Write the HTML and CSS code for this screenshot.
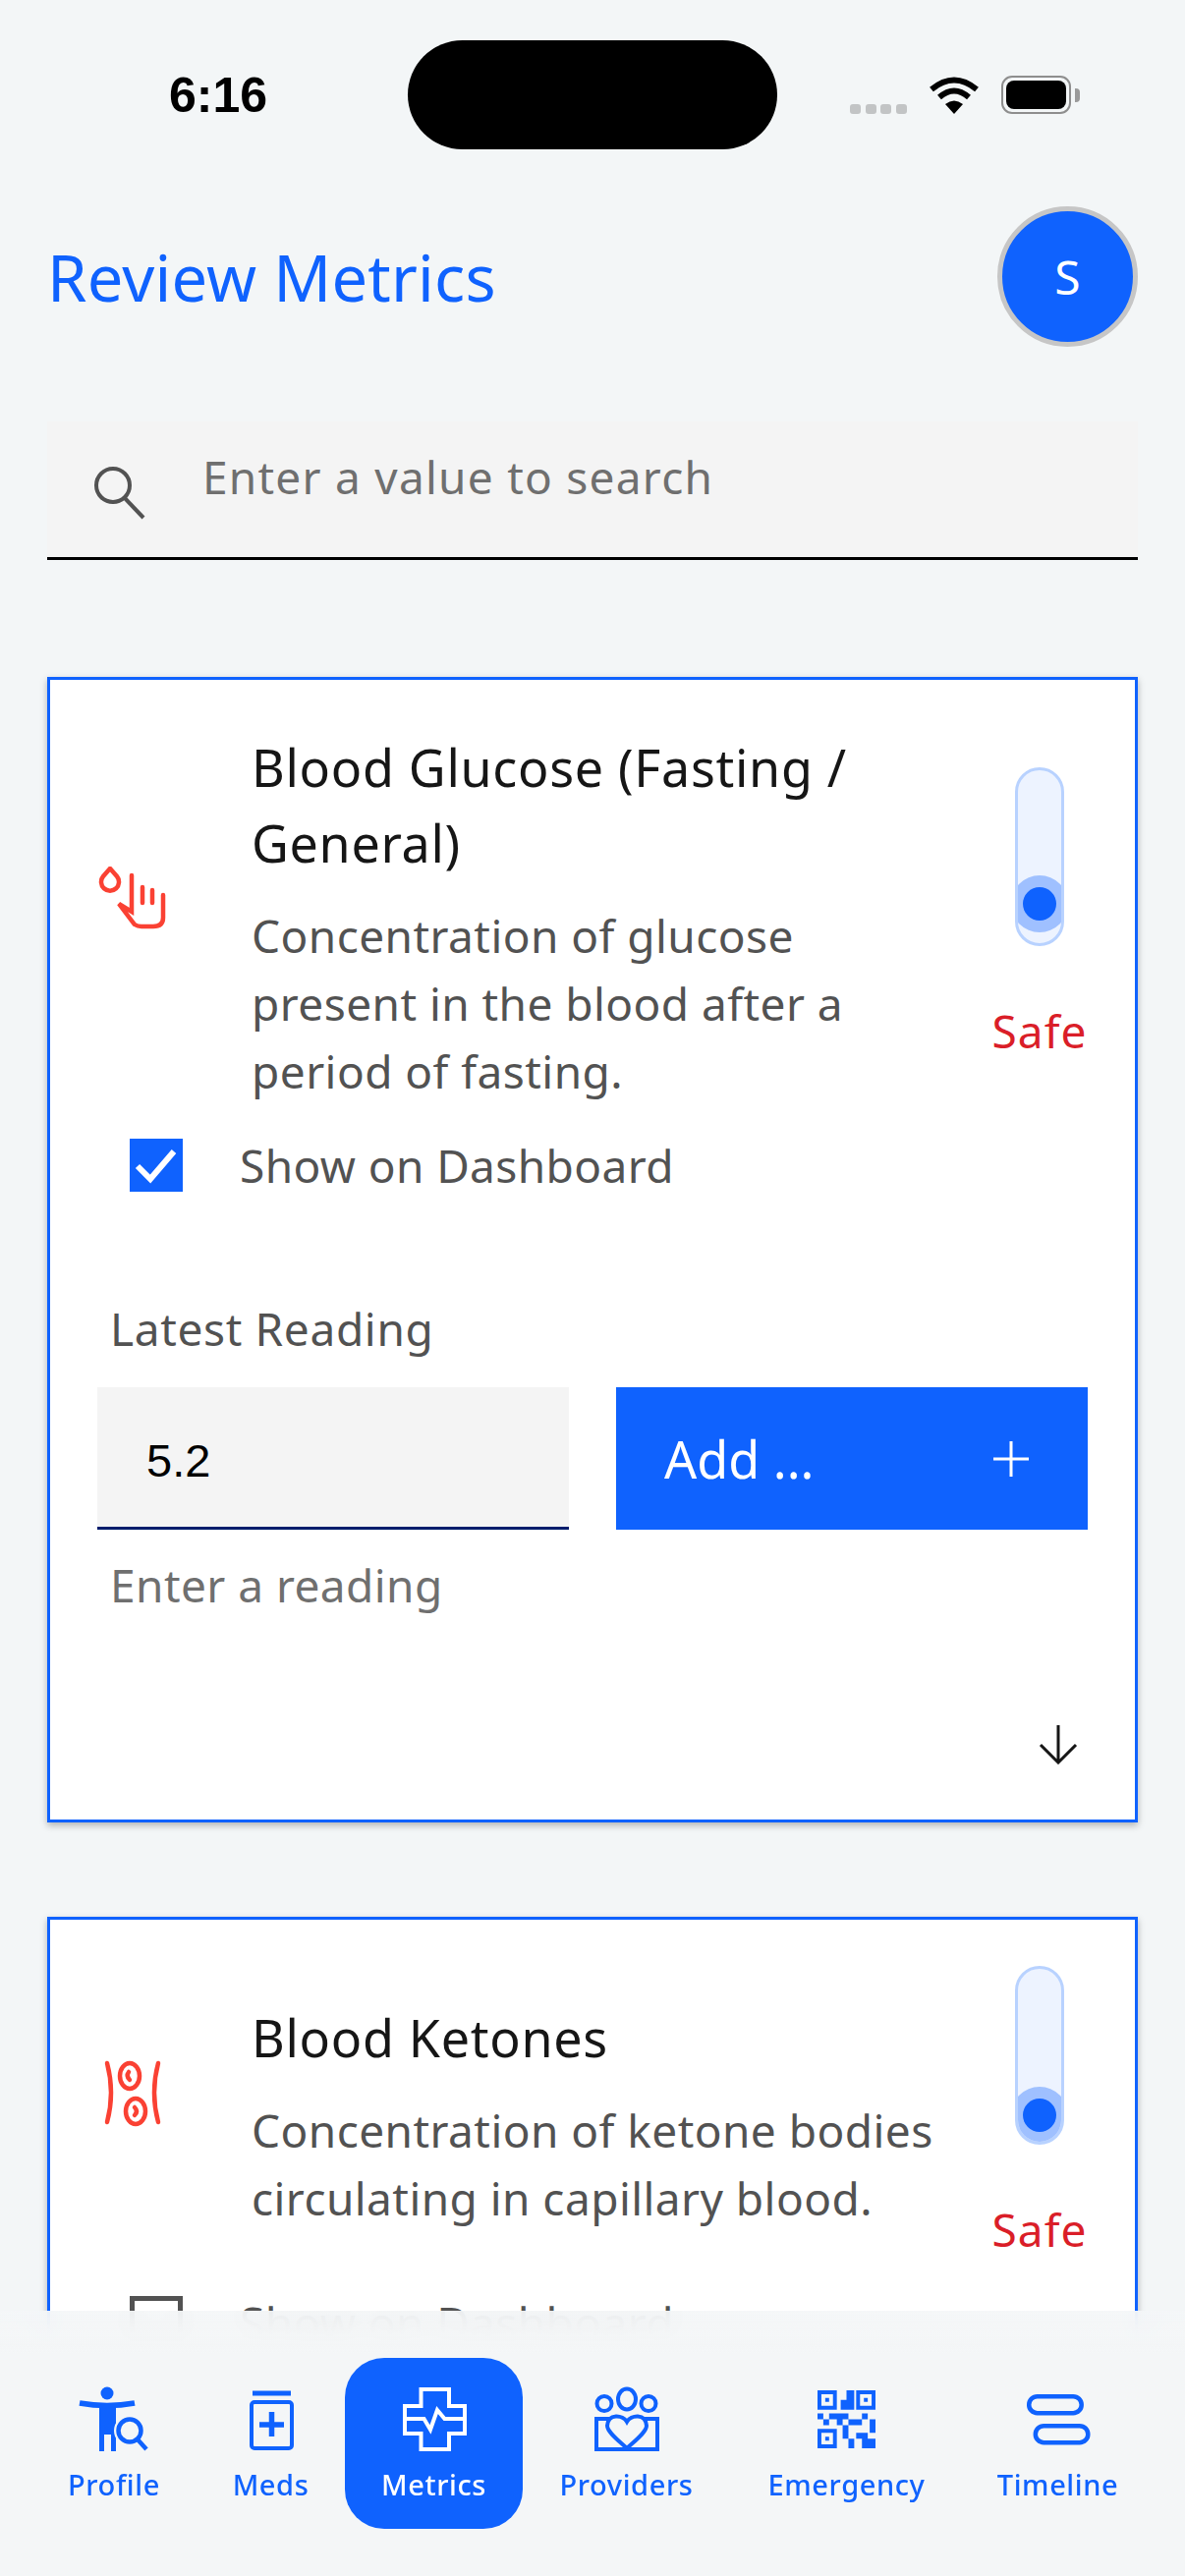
FILE: index.html
```html
<!DOCTYPE html>
<html lang="en">
<head>
<meta charset="utf-8">
<title>Review Metrics</title>
<link rel="stylesheet" href="styles.css">
</head>
<body>
<div class="screen">
  <div class="status">
    <span class="time">6:16</span>
    <div class="island"></div>
    <div class="dots"><i></i><i></i><i></i><i></i></div>
    <svg class="wifi" viewBox="0 0 52 38" width="52" height="38"><path d="M3 13 Q26 -6 49 13" fill="none" stroke="#000" stroke-width="6"/><path d="M11 21 Q26 8 41 21" fill="none" stroke="#000" stroke-width="6"/><path d="M17 28 L26 38 L35 28 Q26 21 17 28Z" fill="#000"/></svg>
    <div class="battery"><div class="battery-fill"></div></div>
    <div class="battery-nub"></div>
  </div>

  <header class="head">
    <h1 class="page-title">Review Metrics</h1>
    <div class="avatar">S</div>
  </header>

  <div class="search">
    <svg class="search-icon" viewBox="0 0 60 60" width="60" height="60"><circle cx="23" cy="23" r="17" fill="none" stroke="#525252" stroke-width="4"/><path d="M35 36 L54 56" fill="none" stroke="#525252" stroke-width="4"/></svg>
    <span class="search-text">Enter a value to search</span>
  </div>

  <section class="card card-first">
    <div class="card-top">
      <div class="card-icon">
        <svg viewBox="0 0 70 66" width="70" height="66" class="red-icon"><path d="M12 2 L19 10 A9 9 0 1 1 5 10 Z"/><path d="M34 9 V46 L21 38 L37 59 Q40 61 44 61 H56 Q66 61 66 52 V29"/><path d="M45 21 V37 M55 24 V37"/></svg>
      </div>
      <div class="card-text">
        <h2 class="card-title">Blood Glucose (Fasting / General)</h2>
        <p class="card-desc">Concentration of glucose present in the blood after a period of fasting.</p>
      </div>
      <div class="card-side">
        <div class="track"><div class="halo halo-mid"><div class="thumb"></div></div></div>
        <span class="safe">Safe</span>
      </div>
    </div>
    <div class="check-row">
      <div class="check check-on"><svg viewBox="0 0 54 54" width="54" height="54"><path d="M8 28 L21 41 L45 13" fill="none" stroke="#fff" stroke-width="6"/></svg></div>
      <span class="check-label">Show on Dashboard</span>
    </div>
    <div class="reading">
      <div class="reading-label">Latest Reading</div>
      <div class="reading-row">
        <div class="reading-input">5.2</div>
        <div class="add-btn"><span>Add ...</span><svg viewBox="0 0 36 36" width="36" height="36"><path d="M18 0 V36 M0 18 H36" stroke="#fff" stroke-width="3" fill="none"/></svg></div>
      </div>
      <div class="reading-help">Enter a reading</div>
    </div>
    <div class="expand"><svg viewBox="0 0 40 40" width="40" height="40"><path d="M20 0 V38 M2 20 L20 38 L38 20" fill="none" stroke="#161616" stroke-width="3"/></svg></div>
  </section>

  <section class="card card-last">
    <div class="card-top">
      <div class="card-icon">
        <svg viewBox="0 0 70 70" width="70" height="70" class="red-icon"><path d="M9 5 Q17 35 9 65 M61 5 Q53 35 61 65"/><ellipse cx="32" cy="18" rx="10" ry="13"/><ellipse cx="38" cy="54" rx="10" ry="13"/><path d="M31 14 Q28 18 32 22 M37 50 Q41 54 37 58"/></svg>
      </div>
      <div class="card-text">
        <h2 class="card-title">Blood Ketones</h2>
        <p class="card-desc">Concentration of ketone bodies circulating in capillary blood.</p>
      </div>
      <div class="card-side">
        <div class="track"><div class="halo halo-low"><div class="thumb"></div></div></div>
        <span class="safe">Safe</span>
      </div>
    </div>
    <div class="check-row">
      <div class="check"></div>
      <span class="check-label">Show on Dashboard</span>
    </div>
  </section>

  <nav class="nav">
    <a class="nav-item">
      <svg viewBox="0 0 72 68" width="72" height="68"><circle cx="29" cy="8" r="6.5" class="f"/><path d="M1 18 Q29 23 57 18" class="s" stroke-width="5.5"/><path d="M21 22 H38 V67 H33 V50 H26 V67 H21 Z" class="f"/><circle cx="52" cy="46" r="16" class="halo-cut"/><circle cx="52" cy="46" r="11.5" class="s" stroke-width="4.5"/><path d="M60 55 L69 65" class="s" stroke-width="4.5"/></svg>
      <span>Profile</span>
    </a>
    <a class="nav-item">
      <svg viewBox="0 0 72 68" width="72" height="68"><rect x="17" y="5.500" width="39" height="5" class="f"/><rect x="16" y="17" width="41" height="47" rx="3" class="s" stroke-width="4"/><path d="M36.500 27 V52 M24 40 H49" class="s" stroke-width="5.500"/></svg>
      <span>Meds</span>
    </a>
    <a class="nav-item nav-active">
      <svg viewBox="0 0 72 68" width="72" height="68"><path d="M22.500 4 H51 V21 H67 V49 H51 V65 H22.500 V49 H6 V21 H22.500 Z" class="s" stroke-width="4"/><path d="M6 34 H25.500 L32 45 L39 25 L46.500 34 H67" class="s" stroke-width="4"/></svg>
      <span>Metrics</span>
    </a>
    <a class="nav-item">
      <svg viewBox="0 0 72 68" width="72" height="68"><ellipse cx="36" cy="14" rx="9" ry="10.500" class="s" stroke-width="4"/><circle cx="13" cy="18.500" r="7.500" class="s" stroke-width="4"/><circle cx="58" cy="18.500" r="7.500" class="s" stroke-width="4"/><path d="M18 34 H5 V65 H67 V34 H54" class="s" stroke-width="4"/><path d="M36 37 C32 30 17 28 16 41 C16 48 30 58 36 64 C42 58 56 48 56 41 C55 28 40 30 36 37Z" class="s" stroke-width="4"/></svg>
      <span>Providers</span>
    </a>
    <a class="nav-item">
      <svg class="qr" viewBox="0 0 15 15" width="59" height="59"><path fill-rule="evenodd" class="f" d="M0 0H5V5H0ZM1 1V4H4V1ZM2 2H3V3H2ZM10 0H15V5H10ZM11 1V4H14V1ZM12 2H13V3H12ZM0 10H5V15H0ZM1 11V14H4V11ZM2 12H3V13H2Z"/><path class="f" d="M7.500 0H9.500V5H6V2.500H7.500ZM0 6H1.500V7.500H0ZM3 6H8V7.500H3ZM11.500 6H13V7.500H11.500ZM1.500 7.500H3V9H1.500ZM5 7.500H6.500V9H5ZM8 7.500H11.500V9H8ZM13.500 7.500H15V11H13.500ZM6.500 9H8V12.500H6.500ZM8 12.500H9.500V13.500H8ZM8 13.500H9.500V15H8ZM10 11H13V12.500H10ZM11.500 12.500H15V15H11.500Z"/></svg>
      <span>Emergency</span>
    </a>
    <a class="nav-item">
      <svg viewBox="0 0 72 68" width="72" height="68"><rect x="6.200" y="11.200" width="53.500" height="17" rx="8.500" class="s" stroke-width="4.500"/><rect x="12.800" y="41.200" width="53.500" height="17" rx="8.500" class="s" stroke-width="4.500"/></svg>
      <span>Timeline</span>
    </a>
  </nav>
</div>
</body>
</html>
```

FILE: styles.css
```css
* { box-sizing: border-box; }
html, body { margin: 0; padding: 0; }
body { background: #f3f6f7; font-family: "Noto Sans", "Liberation Sans", sans-serif; }
.screen { position: relative; width: 1206px; height: 2622px; overflow: hidden; background: #f3f6f7; }

.status { display: flex; align-items: center; height: 152px; padding: 41px 0 0 172px; }
.time { width: 100px; font: 700 50px/1 "Liberation Sans", sans-serif; color: #000; }
.island { width: 376px; height: 111px; margin-left: 143px; background: #000; border-radius: 56px; }
.dots { display: flex; gap: 4.500px; margin-left: 74px; align-self: flex-start; margin-top: 65px; }
.dots i { display: block; width: 11px; height: 10px; border-radius: 3px; background: #c2c4c5; }
.wifi { margin-left: 22px; }
.battery { width: 71px; height: 39px; margin-left: 22px; padding: 3px; border: 2px solid #8e8e8e; border-radius: 11px; }
.battery-fill { width: 100%; height: 100%; background: #000; border-radius: 8px; }
.battery-nub { width: 5px; height: 14px; margin-left: 4px; background: #9a9a9a; border-radius: 0 4px 4px 0; }

.head { display: flex; justify-content: space-between; align-items: center; height: 143px; margin: 58px 48px 0 48px; }
.page-title { margin: 0; font-size: 65px; font-weight: 400; letter-spacing: .2px; line-height: 84px; color: #0f62fe; }
.avatar { display: flex; align-items: center; justify-content: center; width: 143px; height: 143px; border: 5px solid #c6c6c6; border-radius: 50%; background: #0f62fe; color: #fff; font-size: 48px; }

.search { display: flex; align-items: center; height: 141px; margin: 76px 48px 0; padding-left: 44px; background: #f4f4f4; border-bottom: 3px solid #000; }
.search-icon { flex: none; margin-top: 6px; }
.search-text { margin-left: 54px; margin-top: -26px; font-size: 46px; letter-spacing: 1.250px; color: #6f6f6f; }

.card { margin: 96px 48px 0; padding: 47px 0 0; background: #fff; border: 3px solid #0f62fe; box-shadow: 0 3px 7px rgba(0,0,0,.28); }
.card-first { margin-top: 119px; }
.card-last { padding-bottom: 120px; }
.card-top { display: flex; align-items: center; }
.card-icon { flex: none; width: 205px; padding: 0 0 52px 49px; }
.card-first .card-icon { padding-bottom: 42px; }
.red-icon { display: block; fill: none; stroke: #fa4133; stroke-width: 4.500; stroke-linecap: round; }
.card-text { flex: 1; padding: 3px 30px 8px 0; }
.card-title { margin: 0 0 22px; font-size: 52px; font-weight: 400; letter-spacing: .7px; line-height: 77px; color: #161616; }
.card-desc { margin: 0; font-size: 46px; letter-spacing: .450px; line-height: 69px; color: #525252; }
.card-side { flex: none; display: flex; flex-direction: column; align-items: center; width: 130px; height: 310px; margin: 0 32px 0 0; }
.track { display: flex; flex-direction: column; align-items: center; flex: none; width: 50px; height: 182px; overflow: hidden; border: 3px solid #b8d2ff; border-radius: 25px; background: #edf3ff; }
.halo { display: flex; align-items: center; justify-content: center; flex: none; width: 58px; height: 58px; margin-top: auto; border-radius: 50%; background: #9fc0ff; }
.halo-mid { margin-bottom: 11px; }
.halo-low { margin-bottom: -2px; }
.thumb { width: 34px; height: 34px; border-radius: 50%; background: #0f62fe; }
.safe { margin-top: 56px; font-size: 46px; letter-spacing: 1px; line-height: 60px; color: #da1e28; }

.check-row { display: flex; align-items: center; margin-top: 26px; padding-left: 81px; }
.check { flex: none; width: 54px; height: 54px; border: 5px solid #525252; background: #fff; }
.check-on { border: 0; background: #0f62fe; }
.check-on svg { display: block; }
.check-label { margin-left: 58px; font-size: 46px; letter-spacing: .400px; line-height: 54px; color: #525252; }

.reading { margin-top: 109px; padding: 0 48px; }
.reading-label { padding-left: 13px; font-size: 46px; letter-spacing: .650px; line-height: 60px; color: #525252; }
.reading-row { display: flex; gap: 48px; margin-top: 30px; }
.reading-input { flex: 0 0 480px; height: 145px; padding: 45px 0 0 50px; background: #f4f4f4; border-bottom: 3px solid #001d6c; font: 47px/60px "Liberation Sans", sans-serif; color: #000; }
.add-btn { display: flex; flex: 0 0 480px; align-items: center; justify-content: space-between; height: 145px; padding: 0 60px 0 49px; background: #0f62fe; color: #fff; font-size: 52px; }
.reading-help { margin-top: 26px; padding-left: 13px; font-size: 46px; letter-spacing: .450px; line-height: 60px; color: #6f6f6f; }

.expand { display: flex; justify-content: flex-end; margin-top: 113px; padding: 0 58px 56px 0; }
.expand svg { display: block; }

.nav { position: absolute; left: 0; right: 0; bottom: 0; display: grid; grid-template-columns: 168px 151px 181px 211px 237px 193px; height: 270px; padding: 48px 0 0 32px; background: linear-gradient(to bottom, rgba(244,246,247,.9), #f4f6f7 44px); backdrop-filter: blur(14px); }
.nav-item { display: flex; flex-direction: column; align-items: center; height: 174px; padding-top: 28px; border-radius: 40px; color: #0f62fe; font-size: 29px; font-weight: 500; letter-spacing: .6px; line-height: 40px; }
.nav-item svg { display: block; flex: none; }
.nav-item span { margin-top: 13px; }
.nav-item .qr { margin: 5px 0 4px; }
.nav-active { background: #0f62fe; color: #fff; }
.f { fill: currentColor; }
.s { fill: none; stroke: currentColor; }
.halo-cut { fill: #f4f6f7; }
```
